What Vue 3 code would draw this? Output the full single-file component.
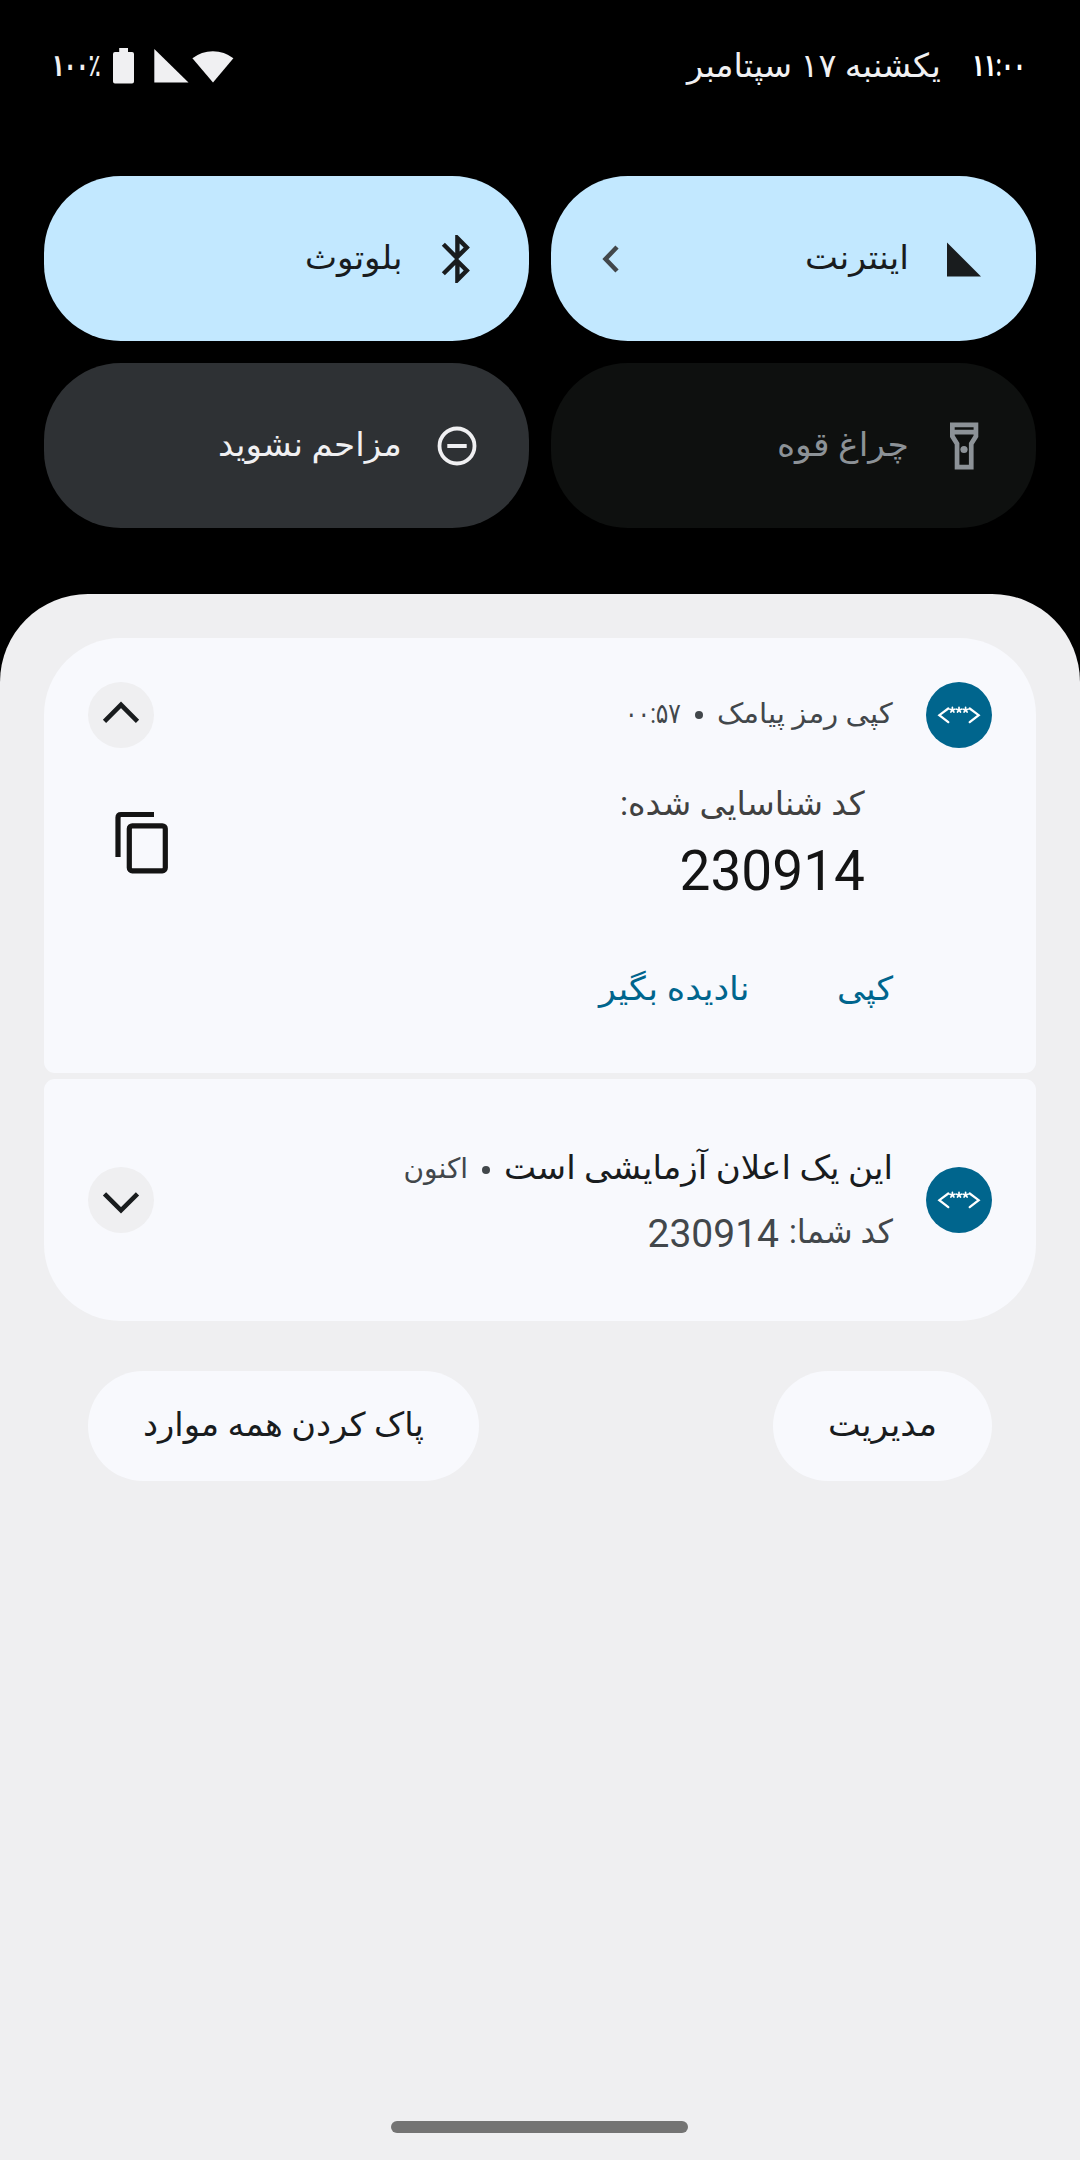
<script setup>
// Scales a label horizontally to a given width, anchored at its right edge.
const vFit = {
  mounted(el, { value }) {
    const natural = el.offsetWidth
    el.style.transform = `scaleX(${value / natural})`
    el.style.marginLeft = `${value - natural}px`
  },
}

// Centres of the three asterisks in the app badge.
const stars = [26.4, 33, 39.6]
</script>

<template>
  <div class="screen" dir="rtl">
    <header class="status">
      <div class="clock">
        <span v-fit="53" class="txt strong">۱۱:۰۰</span>
        <span v-fit="254" class="txt date">یکشنبه ۱۷ سپتامبر</span>
      </div>
      <div class="indicators">
        <svg class="wifi" width="42" height="36" viewBox="0 0 42 36"><path d="M.4 10.3A33 33 0 0 1 41.400 10.300L21 34.500Z" /></svg>
        <svg class="cell" width="35" height="36" viewBox="0 0 35 36"><path d="M.3 1V34.500H34.500Z" /></svg>
        <svg class="battery" width="21" height="36" viewBox="0 0 21 36"><path d="M6.200 0h8.800v4h4q2 0 2 2v27.500q0 2-2 2H2q-2 0-2-2V6q0-2 2-2h4.200Z" /></svg>
        <span v-fit="49" class="txt strong">۱۰۰٪</span>
      </div>
    </header>

    <section class="tiles">
      <button class="tile on">
        <svg class="glyph" width="66" height="66" viewBox="0 0 66 66"><path d="M16 16.500V50.500H50Z" /></svg>
        <span v-fit="104" class="txt">اینترنت</span>
        <svg class="more" width="17" height="28" viewBox="0 0 17 28"><path d="M15 2L3.500 14L15 26" /></svg>
      </button>
      <button class="tile on">
        <svg class="glyph" width="66" height="66" viewBox="0 0 66 66"><path d="M45.900 21.500L33.500 9h-2.300v18.100L20.900 16.700 17.800 19.800 31 33 17.800 46.200l3.100 3.100L31.200 39v18h2.300L45.900 44.500 34.300 33ZM35.600 17.500l4.100 4.100-4.100 4ZM39.700 44.500l-4.100 4.100v-8.200Z" /></svg>
        <span v-fit="97" class="txt">بلوتوث</span>
      </button>
      <button class="tile off">
        <svg class="glyph" width="66" height="66" viewBox="0 0 66 66"><path fill-rule="evenodd" d="M19 9.500H47.300V24L42.600 31.500V56.500H23.700V31.500L19 24ZM23.700 14.200V16.700H42.600V14.200ZM23.700 21.400V22.500L28.400 30V51.800H37.900V30L42.600 22.500V21.400Z" /><circle cx="33" cy="36.500" r="3.600" /></svg>
        <span v-fit="132" class="txt">چراغ قوه</span>
      </button>
      <button class="tile idle">
        <svg class="glyph" width="66" height="66" viewBox="0 0 66 66"><circle cx="33" cy="33" r="17.500" fill="none" stroke="currentColor" stroke-width="3.800" /><path d="M23.300 31H42.700V35H23.300Z" /></svg>
        <span v-fit="184" class="txt">مزاحم نشوید</span>
      </button>
    </section>

    <main class="shade">
      <article class="card first">
        <div class="row">
          <svg class="badge" width="66" height="66" viewBox="0 0 66 66">
            <circle cx="33" cy="33" r="33" />
            <path d="M22.300 26.500L13.300 33.200L22.300 40.200M43.700 26.500L52.700 33.200L43.700 40.200" />
            <path v-for="x in stars" :key="x" class="star" :transform="`translate(${x} 28)`" d="M0 0V-2.600M0 0L2.500-.8M0 0L1.500 2.100M0 0L-1.500 2.100M0 0L-2.500-.8" />
          </svg>
          <span v-fit="176" class="txt small">کپی رمز پیامک</span>
          <i class="dot"></i>
          <span v-fit="56" class="txt small">۰۰:۵۷</span>
          <span class="expand"><svg width="66" height="66" viewBox="0 0 66 66"><path d="M16.500 39.300L33 22.800L49.500 39.300" /></svg></span>
        </div>
        <div class="detected">
          <div class="code">
            <span v-fit="245" class="txt label">کد شناسایی شده:</span>
            <strong>230914</strong>
          </div>
          <svg class="copy" width="54" height="63" viewBox="0 0 54 63"><path d="M39 3.500H6Q3 3.500 3 6.500V46" /><rect x="14.300" y="14.800" width="36" height="45" rx="3" /></svg>
        </div>
        <div class="actions">
          <span v-fit="56" class="txt">کپی</span>
          <span v-fit="151" class="txt">نادیده بگیر</span>
        </div>
      </article>

      <article class="card second">
        <svg class="badge" width="66" height="66" viewBox="0 0 66 66">
          <circle cx="33" cy="33" r="33" />
          <path d="M22.300 26.500L13.300 33.200L22.300 40.200M43.700 26.500L52.700 33.200L43.700 40.200" />
          <path v-for="x in stars" :key="x" class="star" :transform="`translate(${x} 28)`" d="M0 0V-2.600M0 0L2.500-.8M0 0L1.500 2.100M0 0L-1.500 2.100M0 0L-2.500-.8" />
        </svg>
        <div class="message">
          <div class="title">
            <span v-fit="389" class="txt">این یک اعلان آزمایشی است</span>
            <i class="dot"></i>
            <span v-fit="65" class="txt small">اکنون</span>
          </div>
          <div class="body">
            <span v-fit="104" class="txt">کد شما:</span>
            <span class="digits">230914</span>
          </div>
        </div>
        <span class="expand"><svg width="66" height="66" viewBox="0 0 66 66"><path d="M16.500 26.800L33 43.300L49.500 26.800" /></svg></span>
      </article>

      <footer class="controls">
        <button class="pill"><span v-fit="109" class="txt">مدیریت</span></button>
        <button class="pill"><span v-fit="281" class="txt">پاک کردن همه موارد</span></button>
      </footer>

      <div class="handle"></div>
    </main>
  </div>
</template>

<style>
body { margin: 0; background: #000; }
</style>

<style scoped>
.screen {
  width: 1080px;
  height: 2160px;
  display: flex;
  flex-direction: column;
  overflow: hidden;
  background: #000;
  font-family: Roboto, "DejaVu Sans", sans-serif;
  font-size: 33px;
}
button { border: 0; font: inherit; margin: 0; }
.txt {
  flex: none;
  white-space: nowrap;
  line-height: 48px;
  transform-origin: right center;
}
.small { font-size: 28px; }
.strong { font-weight: 700; font-size: 31px; }

.status {
  height: 132px;
  flex: none;
  display: flex;
  justify-content: space-between;
  align-items: center;
  box-sizing: border-box;
  padding: 0 55px 0 52px;
  color: #fff;
}
.clock { display: flex; gap: 31px; }
.date { color: #f0f0f2; }
.indicators { display: flex; align-items: center; color: #f0f0f2; fill: #f0f0f2; }
.wifi { margin-left: 3px; }
.cell { margin-left: 20px; }
.battery { margin-left: 12px; }

.tiles {
  flex: none;
  display: grid;
  grid-template-columns: 485px 485px;
  grid-auto-rows: 165px;
  gap: 22px;
  padding: 44px 44px 66px;
}
.tile {
  display: flex;
  align-items: center;
  border-radius: 77px;
  padding: 0 39px 0 51px;
}
.tile .txt { padding-bottom: 2px; }
.glyph { fill: currentColor; margin-left: 22px; flex: none; }
.on { background: #c2e8ff; color: #191c1e; }
.off { background: #0e100f; color: #8c9297; }
.idle { background: #2e3134; color: #f0f0f2; }
.more {
  margin-right: auto;
  fill: none;
  stroke: #42474b;
  stroke-width: 4.500;
}

.shade {
  flex: 1;
  display: flex;
  flex-direction: column;
  box-sizing: border-box;
  padding: 44px 44px 27px;
  border-radius: 88px 88px 0 0;
  background: #efeff1;
}
.card { flex: none; box-sizing: border-box; background: #f8f9fd; padding: 44px; }
.first { height: 435px; border-radius: 77px 77px 11px 11px; }
.second {
  height: 242px;
  margin-top: 6px;
  border-radius: 11px 11px 77px 77px;
  display: flex;
  align-items: center;
}
.row { display: flex; align-items: center; color: #42474b; }
.row .txt { padding-bottom: 2px; }
.badge { fill: #00658d; margin-left: 33px; flex: none; }
.badge path { fill: none; stroke: #fff; stroke-width: 2.200; stroke-linecap: round; }
.badge .star { stroke-width: 1.700; }
.dot {
  flex: none;
  width: 8px;
  height: 8px;
  border-radius: 50%;
  background: #42474b;
  margin: 0 14px;
}
.expand {
  margin-right: auto;
  width: 66px;
  height: 66px;
  border-radius: 50%;
  background: #efeff1;
}
.expand path { fill: none; stroke: #191c1e; stroke-width: 4.600; }

.detected {
  display: flex;
  justify-content: space-between;
  padding: 32px 127px 0 27px;
}
.code { display: flex; flex-direction: column; align-items: flex-start; }
.label { color: #414141; }
.code strong {
  margin-top: 10px;
  font-size: 55px;
  line-height: 66px;
  font-weight: 400;
  color: #141414;
}
.copy { margin-top: 31px; fill: none; stroke: #141414; stroke-width: 5.200; }
.actions {
  display: flex;
  gap: 87px;
  padding: 61px 99px 0 0;
  color: #00658d;
}

.title, .body { display: flex; align-items: center; }
.title { color: #191c1e; }
.title .txt { padding-bottom: 4px; }
.title .small { color: #42474b; padding-bottom: 1px; }
.body { color: #42474b; gap: 10px; margin-top: 12px; }
.body .txt { padding-bottom: 1px; }
.digits { font-size: 39px; line-height: 44px; padding-top: 4px; }

.controls {
  display: flex;
  justify-content: space-between;
  padding: 50px 44px 0;
}
.pill {
  height: 110px;
  padding: 0 55px 2px;
  border-radius: 55px;
  background: #f8f9fd;
  color: #191c1e;
  display: flex;
  align-items: center;
}
.handle {
  width: 297px;
  height: 12px;
  border-radius: 6px;
  background: #747474;
  margin: auto 348px 0 347px;
}
</style>
